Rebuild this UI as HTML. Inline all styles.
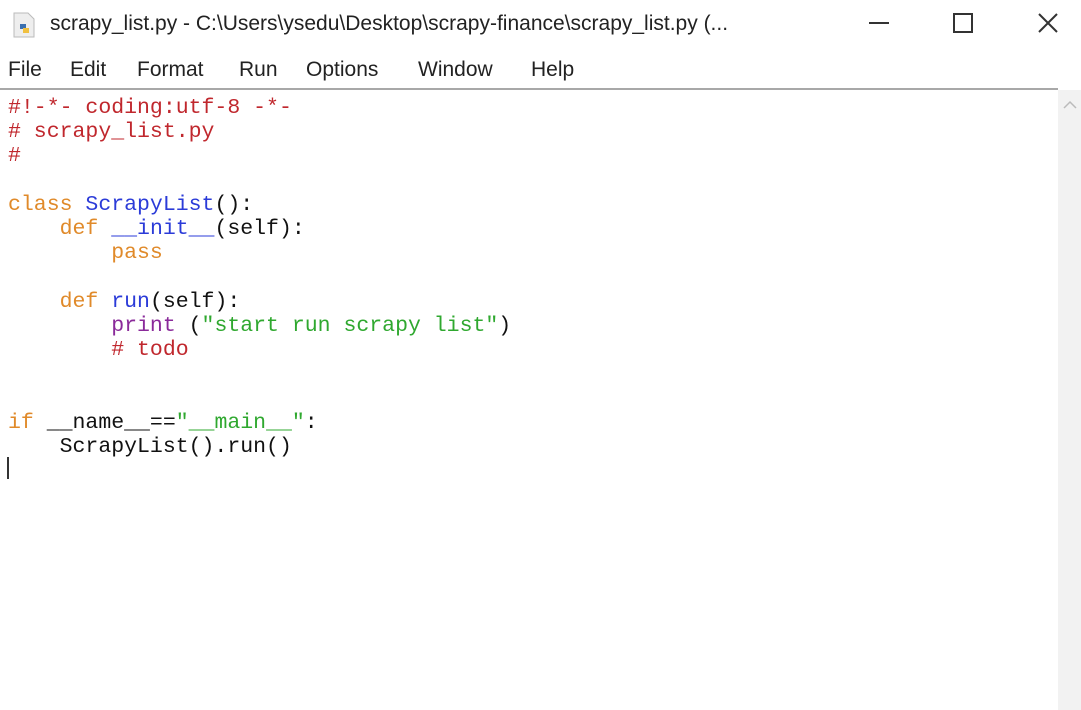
<!DOCTYPE html>
<html><head><style>
body{margin:0;width:1081px;height:710px;background:#fff;overflow:hidden;position:relative;font-family:"Liberation Sans","Noto Sans CJK SC",sans-serif}
.title{position:absolute;left:0;top:0;width:1081px;height:50px;background:#fff}
.title .t{position:absolute;left:50px;top:12px;font-size:21px;color:#222;white-space:nowrap}
.menu{position:absolute;left:0;top:52px;height:36px;font-size:21px;color:#222}
.menu span{position:absolute;top:6px;white-space:nowrap}
.sep{position:absolute;left:0;top:88px;width:1058px;height:2px;background:#a8a8a8}
.sb{position:absolute;left:1058px;top:90px;width:23px;height:620px;background:#f2f2f2}
pre{position:absolute;left:8px;top:96px;margin:0;font-family:"Liberation Mono",monospace;font-size:21.5px;line-height:24.2px;color:#111}
.c{color:#c0272d}.k{color:#e08a2a}.d{color:#2b3bd8}.s{color:#2fa82f}.b{color:#8a2a9a}
.cur{position:absolute;left:7px;top:457px;width:2px;height:22px;background:#333}
</style></head><body>
<div class="title">
<svg style="position:absolute;left:12px;top:12px" width="24" height="26"><path d="M2 1h14l6 6v18H2z" fill="#eee" stroke="#bbb"/><path d="M8 12h6v5H8z" fill="#3a6fb0"/><path d="M11 16h6v5h-6z" fill="#f0c040"/></svg>
<div class="t">scrapy_list.py - C:\Users\ysedu\Desktop\scrapy-finance\scrapy_list.py (...</div>
<div style="position:absolute;left:869px;top:22px;width:20px;height:2px;background:#333"></div>
<div style="position:absolute;left:953px;top:13px;width:16px;height:16px;border:2px solid #333"></div>
<svg style="position:absolute;left:1037px;top:12px" width="22" height="22"><path d="M2 2L20 20M20 2L2 20" stroke="#333" stroke-width="2"/></svg>
</div>
<div class="menu">
<span style="left:8px">File</span><span style="left:70px">Edit</span><span style="left:137px">Format</span><span style="left:239px">Run</span><span style="left:306px">Options</span><span style="left:418px">Window</span><span style="left:531px">Help</span>
</div>
<div class="sep"></div>
<div class="sb"><svg style="position:absolute;left:5px;top:10px" width="14" height="10"><path d="M1 8L7 2L13 8" stroke="#bbb" fill="none" stroke-width="1.5"/></svg></div>
<pre><span class="c">#!-*- coding:utf-8 -*-
# scrapy_list.py
#</span>

<span class="k">class</span> <span class="d">ScrapyList</span>():
    <span class="k">def</span> <span class="d">__init__</span>(self):
        <span class="k">pass</span>

    <span class="k">def</span> <span class="d">run</span>(self):
        <span class="b">print</span> (<span class="s">"start run scrapy list"</span>)
        <span class="c"># todo</span>


<span class="k">if</span> __name__==<span class="s">"__main__"</span>:
    ScrapyList().run()
</pre>
<div class="cur"></div>
</body></html>
